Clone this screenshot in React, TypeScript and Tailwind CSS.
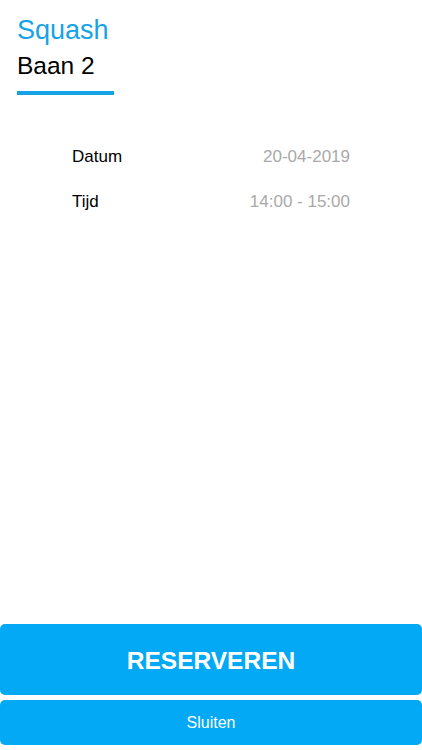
const rows = [
  { label: 'Datum', value: '20-04-2019' },
  { label: 'Tijd', value: '14:00 - 15:00' },
];

export default function App() {
  return (
    <div className="flex h-[750px] w-full flex-col bg-white font-['Liberation_Sans',Arial,sans-serif]">
      <header className="px-[17px] pt-[13px]">
        <h1 className="text-[27px] leading-[34px] text-[#16a3e6]">Squash</h1>
        <h2 className="mt-[4px] text-[24.5px] leading-[30px] text-black">Baan 2</h2>
        <div className="mt-[10px] h-[4px] w-[97px] bg-[#16a3e6]" />
      </header>

      <div className="mt-[52px] flex flex-col gap-[25px] pl-[72px] pr-[72px]">
        {rows.map((row) => (
          <div key={row.label} className="flex items-center justify-between text-[17px] leading-[20px]">
            <span className="text-black">{row.label}</span>
            <span className="text-[#a9a9a9]">{row.value}</span>
          </div>
        ))}
      </div>

      <div className="mt-auto flex flex-col gap-[5px] pb-[5px]">
        <button className="h-[71px] w-full rounded-[5px] bg-[#03a9f4] pt-[3px] text-[24.5px] font-bold text-white">
          RESERVEREN
        </button>
        <button className="h-[45px] w-full rounded-[5px] bg-[#03a9f4] text-[16px] text-white">
          Sluiten
        </button>
      </div>
    </div>
  );
}
